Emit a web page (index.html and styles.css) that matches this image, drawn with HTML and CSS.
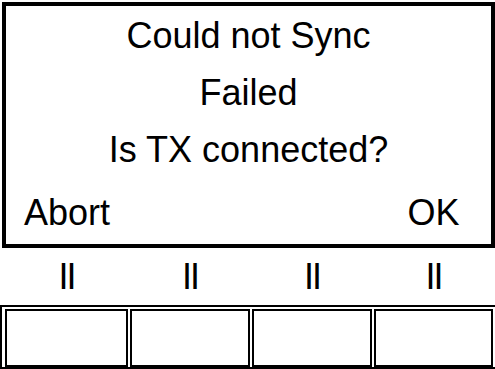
FILE: index.html
```html
<!DOCTYPE html>
<html>
<head>
  <title>Sync</title>
  <link rel="stylesheet" href="styles.css">
</head>
<body>
  <div class="dialog">
    <div class="line">Could not Sync</div>
    <div class="line">Failed</div>
    <div class="line">Is TX connected?</div>
    <div class="actions">
      <span>Abort</span>
      <span></span>
      <span></span>
      <span>OK</span>
    </div>
  </div>

  <div class="pauses">
    <span>II</span>
    <span>II</span>
    <span>II</span>
    <span>II</span>
  </div>

  <div class="keys">
    <div class="key"></div>
    <div class="key"></div>
    <div class="key"></div>
    <div class="key"></div>
  </div>
</body>
</html>
```

FILE: styles.css
```css
body {
  margin: 0;
  overflow: hidden;
  font-family: "Liberation Sans", Arial, sans-serif;
  font-size: 36px;
  color: #000;
  background: #fff;
}
.dialog {
  box-sizing: border-box;
  width: 493px;
  height: 246px;
  margin: 2px 0 0 2px;
  border: 4px solid #000;
  padding-top: 1px;
}
.line {
  text-align: center;
  line-height: 57px;
}
.actions {
  display: grid;
  grid-template-columns: 122px 120px 120px 119px;
  column-gap: 2px;
  margin-top: 6px;
  line-height: 57px;
  text-align: center;
}
.pauses {
  display: grid;
  grid-template-columns: 123px 120px 120px 119px;
  column-gap: 2px;
  padding-left: 5px;
  height: 57px;
  line-height: 57px;
  text-align: center;
}
.pauses span {
  letter-spacing: -2px;
}
.keys {
  display: grid;
  grid-template-columns: 123px 120px 120px 119px;
  column-gap: 2px;
  width: 502px;
  box-sizing: border-box;
  border: 2px solid #000;
  padding: 2px 0 0 3px;
}
.key {
  box-sizing: border-box;
  height: 58px;
  border: 2px solid #000;
}
```
